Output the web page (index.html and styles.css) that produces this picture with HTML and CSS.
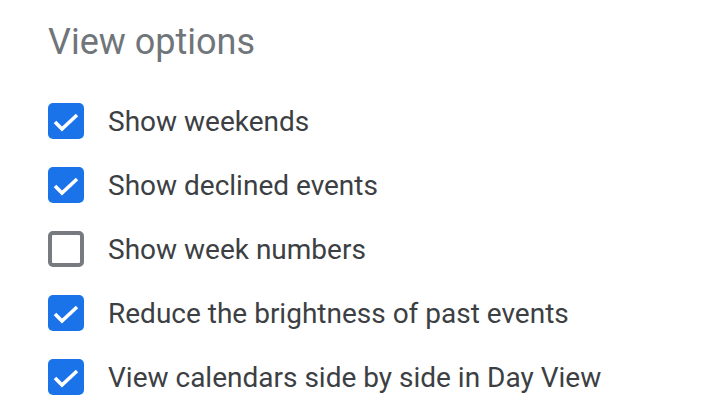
FILE: index.html
```html
<html>
<head>
  <link rel="stylesheet" href="styles.css">
</head>

<body>
  <div id="viewOptions">
    <h1 class="title">View options</h1>

    <label class="option">
      <span class="box checked">
        <svg viewBox="0 0 36 36"><polyline points="7,19 14,26 29,12"/></svg>
      </span>
      <span class="label">Show weekends</span>
    </label>

    <label class="option">
      <span class="box checked">
        <svg viewBox="0 0 36 36"><polyline points="7,19 14,26 29,12"/></svg>
      </span>
      <span class="label">Show declined events</span>
    </label>

    <label class="option">
      <span class="box"></span>
      <span class="label">Show week numbers</span>
    </label>

    <label class="option">
      <span class="box checked">
        <svg viewBox="0 0 36 36"><polyline points="7,19 14,26 29,12"/></svg>
      </span>
      <span class="label">Reduce the brightness of past events</span>
    </label>

    <label class="option">
      <span class="box checked">
        <svg viewBox="0 0 36 36"><polyline points="7,19 14,26 29,12"/></svg>
      </span>
      <span class="label">View calendars side by side in Day View</span>
    </label>
  </div>
</body>
</html>
```

FILE: styles.css
```css
body
{
  margin: 0;
  background-color: #ffffff;
  font-family: Roboto, "Liberation Sans", sans-serif;
}

#viewOptions
{
  display: flex;
  flex-direction: column;
  padding: 20px 0 0 48px;
}

.title
{
  margin: 0 0 25px 0;
  font-size: 36px;
  font-weight: 400;
  line-height: 44px;
  color: #70757a;
}

.option
{
  display: flex;
  align-items: center;
  gap: 24px;
  height: 64px;
}

.box
{
  box-sizing: border-box;
  width: 36px;
  height: 36px;
  border: 4px solid #777a7e;
  border-radius: 5px;
  display: flex;
}

.box.checked
{
  border: none;
  background-color: #1a73e8;
}

.box svg
{
  width: 36px;
  height: 36px;
}

.box polyline
{
  fill: none;
  stroke: #ffffff;
  stroke-width: 3.6;
}

.label
{
  font-size: 28px;
  color: #3c4043;
}
```
